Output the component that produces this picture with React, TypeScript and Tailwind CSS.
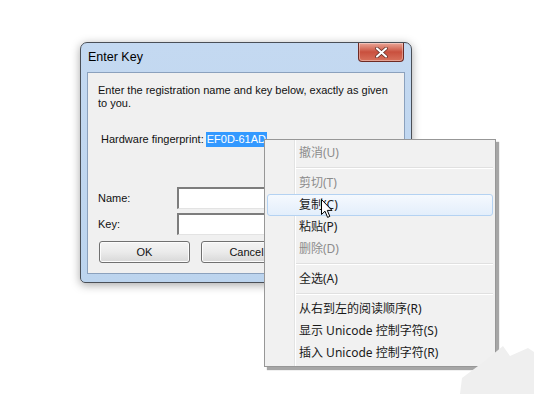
import type { ReactNode } from "react";

const ui = "font-['Liberation_Sans','Noto_Sans',sans-serif]";
const cjk = "font-['Noto_Sans','Noto_Sans_CJK_SC',sans-serif]";

type Item = { label: string; disabled?: boolean; hover?: boolean } | "sep";

const items: Item[] = [
  { label: "撤消(U)", disabled: true },
  "sep",
  { label: "剪切(T)", disabled: true },
  { label: "复制(C)", hover: true },
  { label: "粘贴(P)" },
  { label: "删除(D)", disabled: true },
  "sep",
  { label: "全选(A)" },
  "sep",
  { label: "从右到左的阅读顺序(R)" },
  { label: "显示 Unicode 控制字符(S)" },
  { label: "插入 Unicode 控制字符(R)" },
];

function Btn({ children }: { children: ReactNode }) {
  return (
    <div className="w-[91px] h-[22px] rounded-[3px] border border-[#707070] bg-gradient-to-b from-[#f4f4f4] via-[#ebebeb] to-[#d8d8d8] shadow-[inset_0_0_0_1px_#fcfcfc] flex items-center justify-center text-[11px] text-[#111]">
      {children}
    </div>
  );
}

function Field() {
  return (
    <div className="w-[220px] h-[22px] border-t-2 border-l-2 border-t-[#7d7d7d] border-l-[#7d7d7d] border-b border-r border-b-[#e3e3e3] border-r-[#e3e3e3] bg-white" />
  );
}

function Dialog() {
  return (
    <div className="absolute left-[80px] top-[42px] w-[332px] h-[241px] rounded-t-[7px] rounded-b-[5px] border border-[#4a4f57] bg-gradient-to-b from-[#c4d9f1] to-[#bcd4ee] shadow-[0_2px_10px_rgba(0,0,0,0.35)] flex flex-col px-[6px] pb-[8px]">
      <div className="h-[29px] flex items-start justify-between pl-[1px]">
        <span className={`${ui} text-[12.5px] text-black mt-[5px]`}>Enter Key</span>
        <div className="w-[46px] h-[19px] mr-[1px] rounded-b-[4px] border border-t-0 border-[#6e2a24] bg-gradient-to-b from-[#e9a597] via-[#c9503e] to-[#d8715c] flex items-center justify-center shadow-[inset_0_0_0_1px_rgba(255,255,255,0.35)]">
          <svg width="13" height="11" viewBox="0 0 13 11">
            <path d="M2 1.5 L11 9.5 M11 1.5 L2 9.5" stroke="#5a2a22" strokeWidth="3.6" strokeLinecap="round" />
            <path d="M2 1.5 L11 9.5 M11 1.5 L2 9.5" stroke="#fff" strokeWidth="2.2" strokeLinecap="round" />
          </svg>
        </div>
      </div>
      <div className={`${ui} flex-1 border border-[#8ba1bd] bg-[#f0f0f0] pl-[10px] pt-[11px] text-[11px] text-[#111] flex flex-col`}>
        <p className="h-[26px] leading-[13px] pr-[4px]">
          Enter the registration name and key below, exactly as given to you.
        </p>
        <div className="mt-[21px] pl-[3px] flex items-center h-[16px]">
          <span>Hardware fingerprint:</span>
          <span className="ml-[2px] bg-[#3399ff] text-white px-[1px] leading-[15px]">EF0D-61AD</span>
        </div>
        <div className="mt-[40px] flex items-center gap-[41px]">
          <span className="w-[38px]">Name:</span>
          <Field />
        </div>
        <div className="mt-[4px] flex items-center gap-[41px]">
          <span className="w-[38px]">Key:</span>
          <Field />
        </div>
        <div className="mt-[6px] pl-[1px] flex gap-[11px]">
          <Btn>OK</Btn>
          <Btn>Cancel</Btn>
        </div>
      </div>
    </div>
  );
}

function Menu() {
  return (
    <div className={`${cjk} absolute left-[264px] top-[139px] w-[232px] border border-[#979797] bg-[#f1f1f1] p-[2px] shadow-[3px_3px_1px_rgba(0,0,0,0.35)] text-[12px]`}>
      <div className="absolute left-[29px] top-0 bottom-0 w-[2px] border-l border-l-[#e2e3e3] border-r border-r-white" />
      {items.map((it, i) =>
        it === "sep" ? (
          <div key={i} className="h-[8px] flex items-center pl-[29px]">
            <div className="w-full h-[2px] border-t border-t-[#e0e0e0] border-b border-b-white" />
          </div>
        ) : (
          <div
            key={i}
            className={`relative h-[22px] flex items-center pl-[31px] rounded-[3px] border ${
              it.hover
                ? "border-[#b4d2f2] bg-gradient-to-b from-[#f5f9fe] to-[#e3eefb]"
                : "border-transparent"
            } ${it.disabled ? "text-[#8c8c8c]" : "text-[#1a1a1a]"}`}
          >
            {it.label}
          </div>
        )
      )}
    </div>
  );
}

function Cursor() {
  return (
    <svg className="absolute left-[321px] top-[199px]" width="13" height="20" viewBox="0 0 13 20">
      <path
        d="M0.5 0.5 L0.5 15.5 L4 12.2 L6.6 18.4 L8.8 17.4 L6.3 11.4 L11 11.4 Z"
        fill="#fff"
        stroke="#000"
        strokeWidth="1"
        strokeLinejoin="round"
      />
    </svg>
  );
}

export default function App() {
  return (
    <div className="relative w-[534px] h-[394px] bg-white overflow-hidden">
      <Dialog />
      <Menu />
      <Cursor />
      <svg className="absolute left-0 top-0" width="534" height="394" viewBox="0 0 534 394">
        <polygon points="460,394 462,378 486,360 503,346 510,356 528,348 534,352 534,394" fill="#efefef" />
      </svg>
    </div>
  );
}
